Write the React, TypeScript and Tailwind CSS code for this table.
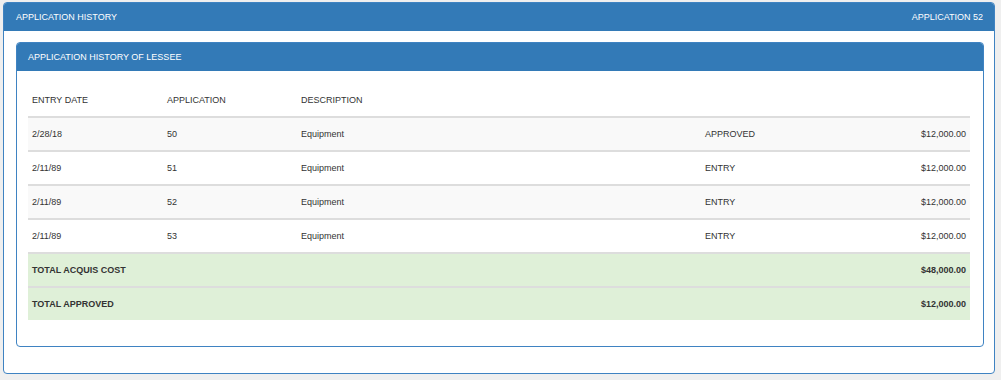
const rows = [
  { date: "2/28/18", app: "50", desc: "Equipment", status: "APPROVED", amount: "$12,000.00" },
  { date: "2/11/89", app: "51", desc: "Equipment", status: "ENTRY", amount: "$12,000.00" },
  { date: "2/11/89", app: "52", desc: "Equipment", status: "ENTRY", amount: "$12,000.00" },
  { date: "2/11/89", app: "53", desc: "Equipment", status: "ENTRY", amount: "$12,000.00" },
];

const totals = [
  { label: "TOTAL ACQUIS COST", amount: "$48,000.00" },
  { label: "TOTAL APPROVED", amount: "$12,000.00" },
];

export default function App() {
  return (
    <div
      className="w-[1001px] h-[380px] bg-[#efefef] pt-[2px] pl-[3px] text-[9px] text-[#333]"
      style={{ fontFamily: '"Liberation Sans", Arial, sans-serif' }}
    >
      {/* Outer panel */}
      <div className="w-[992px] bg-white border border-[#3f83c2] rounded-[4px] overflow-hidden">
        <div className="h-[28px] bg-[#337ab7] flex items-center justify-between pl-[12px] pr-[11px] pt-[1px] text-white">
          <span>APPLICATION HISTORY</span>
          <span>APPLICATION 52</span>
        </div>

        <div className="pt-[11px] pl-[12px] pr-[10px] pb-[26px]">
          {/* Inner panel */}
          <div className="border border-[#3f83c2] rounded-[4px] overflow-hidden">
            <div className="h-[28px] bg-[#337ab7] flex items-center pl-[11px] pt-[1px] text-white">
              <span>APPLICATION HISTORY OF LESSEE</span>
            </div>

            <div className="pt-[11px] pl-[11px] pr-[12px] pb-[26px]">
              <div className="w-[942px]">
                {/* Table header */}
                <div className="h-[34px] pt-[3px] grid grid-cols-[135px_134px_404px_134px_135px] items-center">
                  <div className="px-[4px]">ENTRY DATE</div>
                  <div className="px-[4px]">APPLICATION</div>
                  <div className="px-[4px]">DESCRIPTION</div>
                  <div className="px-[4px]"></div>
                  <div className="px-[4px]"></div>
                </div>

                {/* Rows */}
                {rows.map((r, i) => (
                  <div
                    key={i}
                    className={`h-[34px] pt-[1px] border-t-2 border-[#dddddd] grid grid-cols-[135px_134px_404px_134px_135px] items-center ${
                      i % 2 === 0 ? "bg-[#f9f9f9]" : "bg-white"
                    }`}
                  >
                    <div className="px-[4px]">{r.date}</div>
                    <div className="px-[4px]">{r.app}</div>
                    <div className="px-[4px]">{r.desc}</div>
                    <div className="px-[4px]">{r.status}</div>
                    <div className="px-[4px] text-right">{r.amount}</div>
                  </div>
                ))}

                {/* Totals */}
                {totals.map((t) => (
                  <div
                    key={t.label}
                    className="h-[34px] pt-[1px] border-t-2 border-[#dddddd] bg-[#dff0d8] flex items-center justify-between px-[4px] font-bold"
                  >
                    <span>{t.label}</span>
                    <span>{t.amount}</span>
                  </div>
                ))}
              </div>
            </div>
          </div>
        </div>
      </div>
    </div>
  );
}
